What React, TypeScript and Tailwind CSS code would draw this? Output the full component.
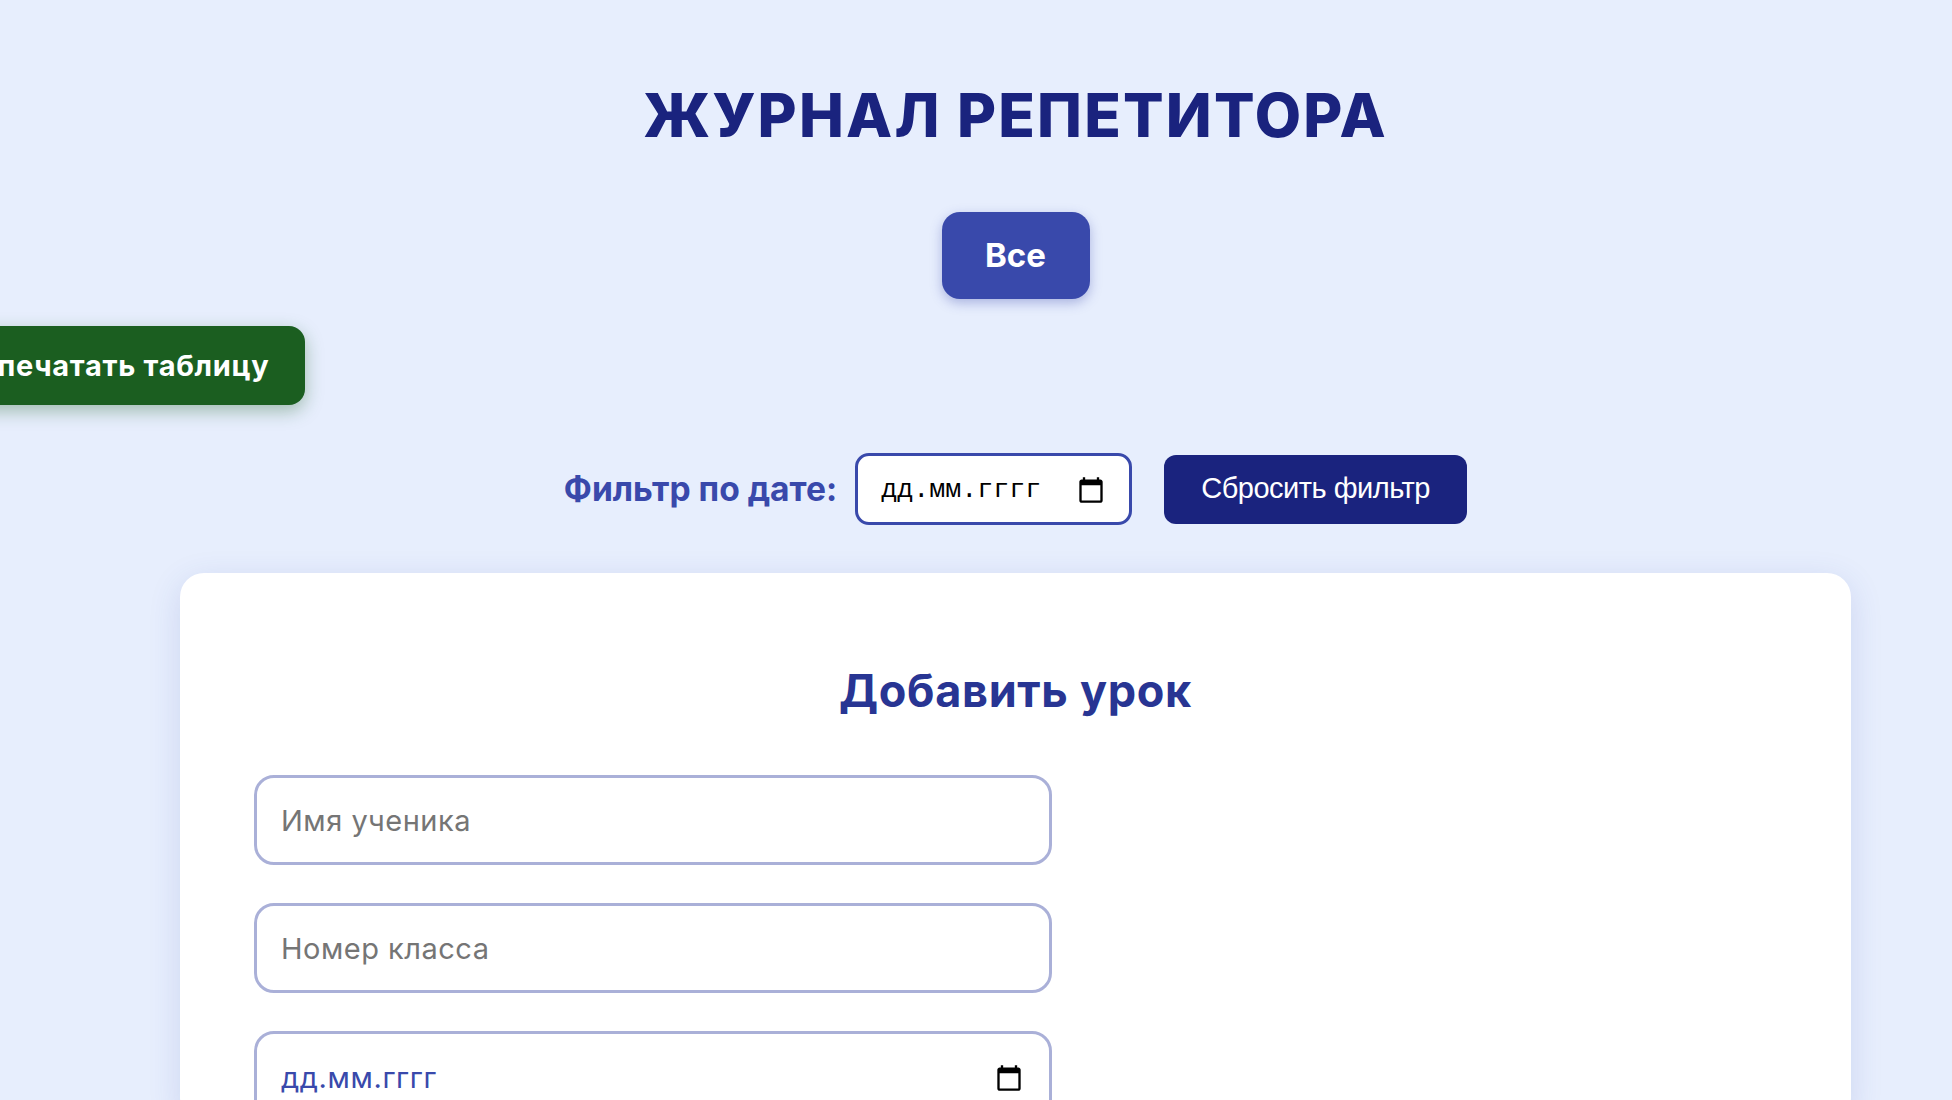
function CalendarIcon({ className }: { className: string }) {
  return (
    <svg viewBox="0 0 24 24" className={className} fill="currentColor" aria-hidden="true">
      <path d="M20 3h-1V1h-2v2H7V1H5v2H4c-1.1 0-2 .9-2 2v16c0 1.1.9 2 2 2h16c1.1 0 2-.9 2-2V5c0-1.1-.9-2-2-2zm0 18H4V8h16v13z" />
    </svg>
  );
}

function FieldInput({ placeholder }: { placeholder: string }) {
  return (
    <input
      placeholder={placeholder}
      className="block h-[90px] w-[798px] rounded-[20px] border-[3px] border-[#aab0d8] bg-white px-[24px] text-[29px] tracking-[0.5px] font-['Inter',sans-serif] outline-none placeholder:text-[#757575]"
    />
  );
}

export default function App() {
  return (
    <div className="h-screen overflow-hidden bg-[#e7eefd]">
      <div className="ml-[180px] flex w-[1671px] flex-col pt-[80px]">
        <h1 className="text-center text-[60px] leading-[70px] font-extrabold tracking-[2.2px] text-[#1a237e] font-['Inter',sans-serif]">
          ЖУРНАЛ РЕПЕТИТОРА
        </h1>

        <div className="mt-[62px] flex justify-center">
          <button className="h-[87px] w-[148px] rounded-[18px] bg-[#3949ab] text-[33px] font-bold text-white shadow-[0_4px_12px_rgba(57,73,171,0.35)] font-['Inter',sans-serif]">
            Все
          </button>
        </div>

        <div className="mt-[27px] flex">
          <button className="-ml-[231px] h-[79px] w-[356px] rounded-2xl bg-[#1b5e20] pr-[37px] text-right text-[29px] font-bold tracking-[0.7px] whitespace-nowrap text-white shadow-[0_6px_18px_rgba(27,94,32,0.35)] font-['Inter',sans-serif]">
            <span className="relative -left-[6px]">Распечатать таблицу</span>
          </button>
        </div>

        <div className="mt-[48px] flex items-center justify-center">
          <span className="text-[33.6px] font-bold whitespace-nowrap text-[#3949ab] font-['Inter',sans-serif]">
            Фильтр по дате:
          </span>
          <div className="ml-[18px] flex h-[72px] w-[277px] items-center justify-between rounded-[14px] border-[3px] border-[#3949ab] bg-white pt-[2px] pr-[24px] pl-[23px]">
            <span className="text-[26.7px] text-black font-['Liberation_Mono',monospace]">дд.мм.гггг</span>
            <CalendarIcon className="h-[28px] w-[28px] text-black" />
          </div>
          <button className="ml-[32px] h-[69px] w-[303px] rounded-xl bg-[#1a237e] text-[29px] tracking-[-0.5px] whitespace-nowrap text-white font-['Liberation_Sans',sans-serif]">
            Сбросить фильтр
          </button>
        </div>

        <div className="mt-[48px] rounded-3xl bg-white px-[74px] pt-[90px] shadow-[0_8px_32px_rgba(57,73,171,0.15)]">
          <h2 className="text-center text-[45px] leading-[56px] font-bold tracking-[0.7px] text-[#283593] font-['Inter',sans-serif]">
            Добавить урок
          </h2>
          <div className="mt-[56px] flex flex-col gap-[38px]">
            <FieldInput placeholder="Имя ученика" />
            <FieldInput placeholder="Номер класса" />
            <div className="flex h-[90px] w-[798px] items-center justify-between rounded-[20px] border-[3px] border-[#aab0d8] bg-white pt-[3px] pr-[26px] pl-[24px]">
              <span className="text-[29px] tracking-[0.6px] text-[#3949ab] font-['Inter',sans-serif]">дд.мм.гггг</span>
              <CalendarIcon className="h-[28px] w-[28px] text-black" />
            </div>
          </div>
        </div>
      </div>
    </div>
  );
}
